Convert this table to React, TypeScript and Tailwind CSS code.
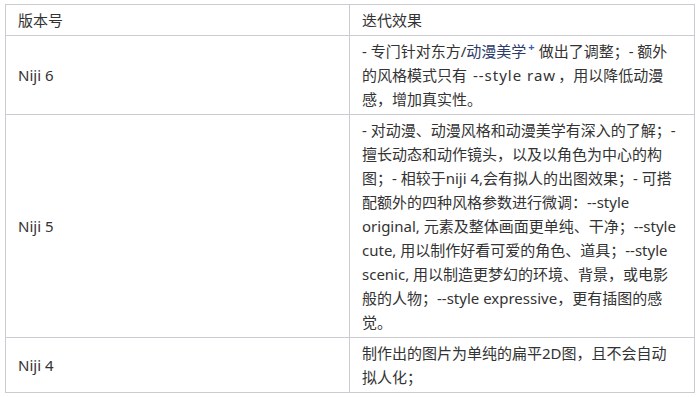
import React from 'react';

const rows = [
  {
    version: 'Niji 6',
    effect: (
      <>
        - 专门针对东方/
        <span className="text-[#2b3a67]">动漫美学</span>
        <span className="inline-block align-top text-[11px] leading-[16px] ml-[2px] mr-[4px] text-[#3b5bb5] font-bold">+</span>
        做出了调整；- 额外的风格模式只有 <span className="tracking-[1px] px-[2px]">--style raw</span>，用以降低动漫感，增加真实性。
      </>
    ),
  },
  {
    version: 'Niji 5',
    effect:
      '- 对动漫、动漫风格和动漫美学有深入的了解；- 擅长动态和动作镜头，以及以角色为中心的构图；- 相较于niji 4,会有拟人的出图效果；- 可搭配额外的四种风格参数进行微调：--style original, 元素及整体画面更单纯、干净；--style cute, 用以制作好看可爱的角色、道具；--style scenic, 用以制造更梦幻的环境、背景，或电影般的人物；--style expressive，更有插图的感觉。',
  },
  {
    version: 'Niji 4',
    effect: '制作出的图片为单纯的扁平2D图，且不会自动拟人化；',
  },
];

export default function App() {
  return (
    <div className="w-[699px] h-[397px] bg-white pt-[4px] pl-[5px] font-['Noto_Sans','Noto_Sans_CJK_SC',sans-serif] text-[15px] leading-[24px] text-[#333]">
      <table className="w-[689px] border-collapse table-fixed">
        <colgroup>
          <col className="w-[344px]" />
          <col className="w-[345px]" />
        </colgroup>
        <thead>
          <tr>
            <th className="border border-[#cbcbd2] px-[12px] py-[3px] text-left font-normal">版本号</th>
            <th className="border border-[#cbcbd2] px-[12px] py-[3px] text-left font-normal">迭代效果</th>
          </tr>
        </thead>
        <tbody>
          {rows.map((r) => (
            <tr key={r.version}>
              <td className="border border-[#cbcbd2] px-[12px] py-[3px] align-middle">{r.version}</td>
              <td className="border border-[#cbcbd2] pl-[12px] pr-[13px] py-[3px] align-middle">{r.effect}</td>
            </tr>
          ))}
        </tbody>
      </table>
    </div>
  );
}
